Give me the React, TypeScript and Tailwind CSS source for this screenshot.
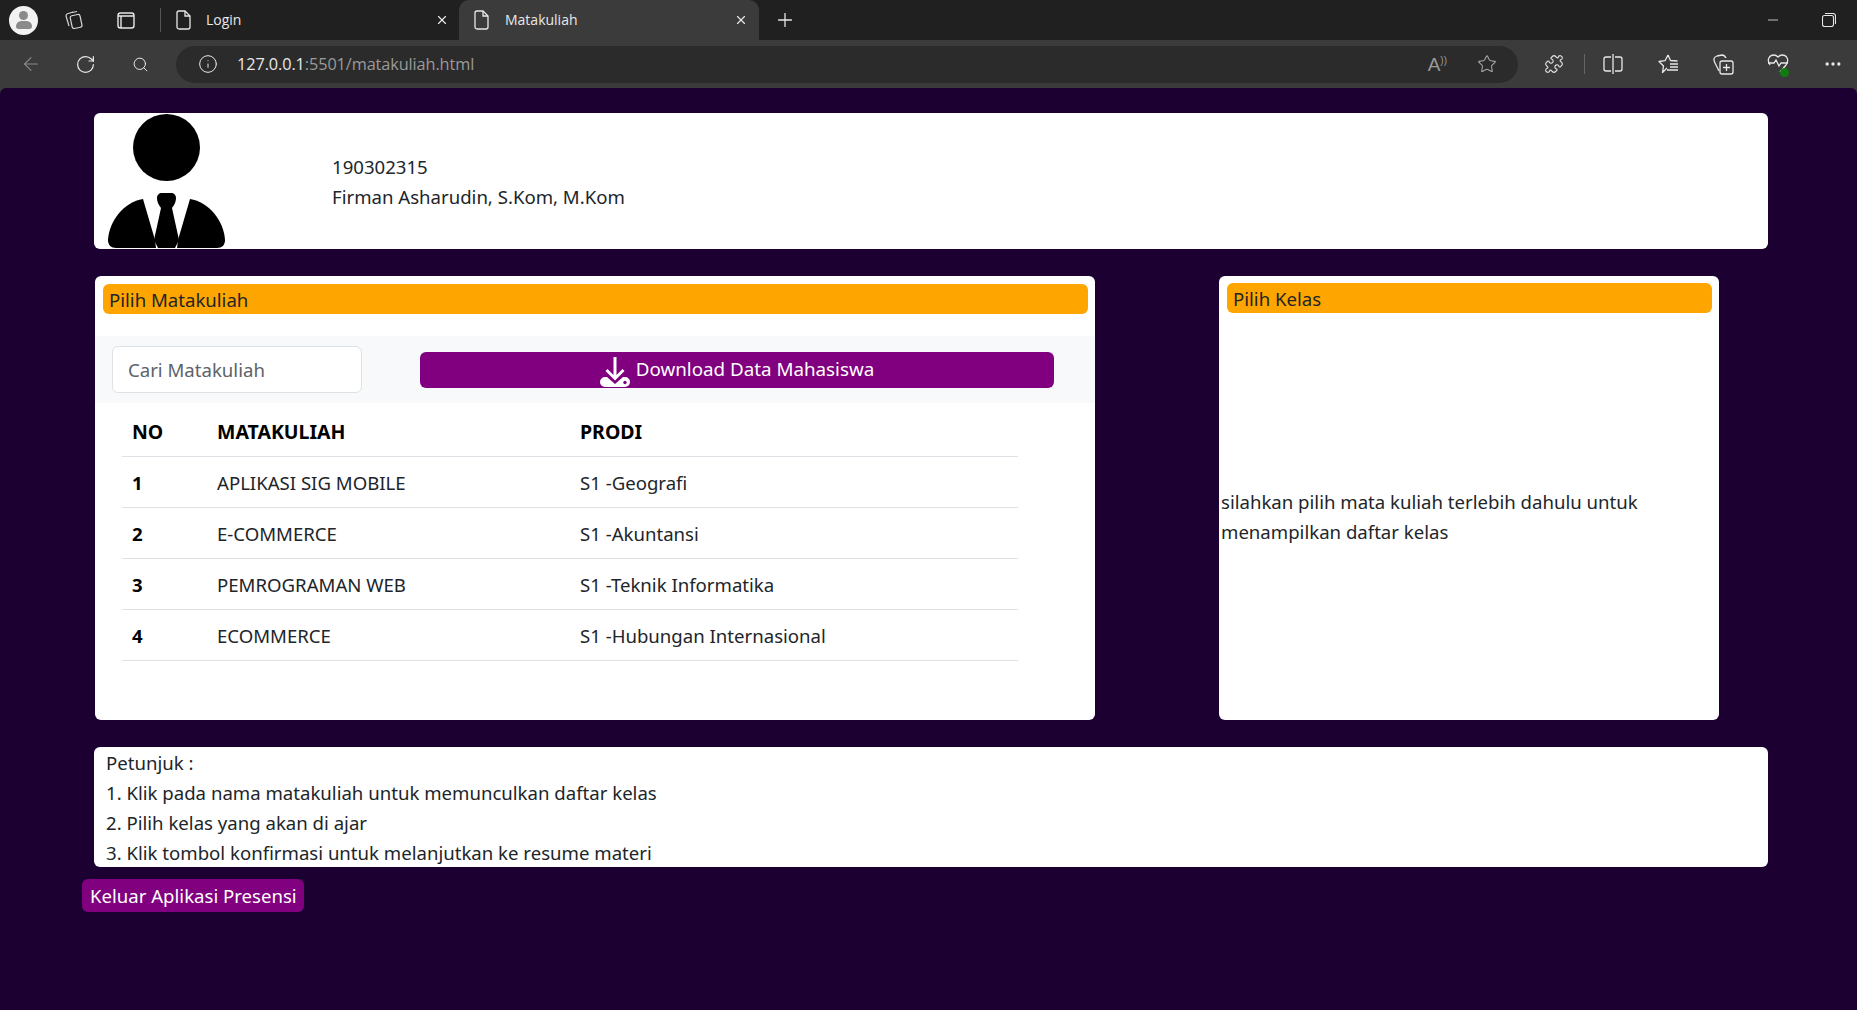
import { Ellipsis, Info, Minus, Plus, RotateCw, Search, Star, X, ArrowLeft, Puzzle } from "lucide-react";

const rows = [
  { no: 1, name: "APLIKASI SIG MOBILE", prodi: "S1 -Geografi" },
  { no: 2, name: "E-COMMERCE", prodi: "S1 -Akuntansi" },
  { no: 3, name: "PEMROGRAMAN WEB", prodi: "S1 -Teknik Informatika" },
  { no: 4, name: "ECOMMERCE", prodi: "S1 -Hubungan Internasional" },
];

const PageIcon = () => (
  <svg width="16" height="20" viewBox="0 0 16 20" fill="none" stroke="#e8e8e8" strokeWidth="1.3">
    <path d="M3 1h6l5 5v11a2 2 0 0 1-2 2H3a2 2 0 0 1-2-2V3a2 2 0 0 1 2-2z" />
    <path d="M9 1v5h5" />
  </svg>
);

const Avatar = () => (
  <svg width="117" height="136" viewBox="0 0 117 136" className="shrink-0">
    <ellipse cx="58.500" cy="34.500" rx="33.500" ry="33.500" fill="#000" />
    <path d="M49 85c0-3 2-5 5-5h9c3 0 5 2 5 5 0 3-1 6-4 10l7 32-4 8H50l-4-8 7-32c-3-4-4-7-4-10z" fill="#000" />
    <path d="M35 86L47 127 48 135H8C3 135 0 132 0 127 1 108 16 89 35 86z" fill="#000" />
    <path d="M82 86L70 127 69 135H109C114 135 117 132 117 127 116 108 101 89 82 86z" fill="#000" />
  </svg>
);

const DownloadIcon = () => (
  <svg width="30" height="30" viewBox="0 0 30 30" fill="#fff" className="mt-[4px] shrink-0">
    <path d="M13.500 0h3v18l6-6 2 2-9.500 9.500L5.500 14l2-2 6 6z" />
    <path d="M5 20h2l8 7 8-7h2a5 5 0 0 1 0 10H5a5 5 0 0 1 0-10z" />
    <circle cx="25" cy="25.500" r="1.700" fill="#800080" />
  </svg>
);

const SplitIcon = () => (
  <svg width="20" height="20" viewBox="0 0 20 20" fill="none" stroke="#e8e8e8" strokeWidth="1.300">
    <path d="M8 3H3a2 2 0 0 0-2 2v10a2 2 0 0 0 2 2h5" />
    <path d="M12 3h5a2 2 0 0 1 2 2v10a2 2 0 0 1-2 2h-5" />
    <path d="M10 0v20" />
  </svg>
);

const FavIcon = () => (
  <svg width="21" height="20" viewBox="0 0 21 20" fill="none" stroke="#e8e8e8" strokeWidth="1.300" strokeLinejoin="round">
    <path d="M10 1l2.500 5.500 7 .5M9 14l-4.500 4.500 1-6.500L1 7.500l6-.8L10 1" />
    <path d="M12 10h8M12 13h8M9 16h11" />
  </svg>
);

const CollectionsIcon = () => (
  <svg width="21" height="21" viewBox="0 0 21 21" fill="none" stroke="#e8e8e8" strokeWidth="1.300">
    <path d="M6 17L2 9C0 5 1 3 4 2l5-1c2 0 3 1 4 3" />
    <rect x="7" y="7" width="13" height="13" rx="2" />
    <path d="M13.500 10v7M10 13.500h7" />
  </svg>
);

const RestoreIcon = () => (
  <svg width="14" height="14" viewBox="0 0 14 14" fill="none" stroke="#e8e8e8" strokeWidth="1.100">
    <rect x="0.500" y="2.500" width="11" height="11" rx="2" />
    <path d="M3 .5h8a2.500 2.500 0 0 1 2.500 2.500v8" />
  </svg>
);

export default function App() {
  return (
    <div className="min-h-screen flex flex-col bg-[#3b3b3b] font-['Noto_Sans',sans-serif] overflow-hidden">
      {/* barra de pestañas */}
      <div className="h-10 bg-[#202020] flex items-center text-[14px] text-[#e8e8e8] font-['Open_Sans',sans-serif] shrink-0">
        <div className="ml-[9px] w-[29px] h-[29px] rounded-full bg-[#f2f2f2] flex flex-col items-center justify-center">
          <div className="w-[9px] h-[9px] rounded-full bg-[#8a8a8a]" />
          <div className="w-[16px] h-[8px] mt-[1px] rounded-t-[6px] rounded-b-[3px] bg-[#8a8a8a]" />
        </div>
        <svg className="ml-[26px]" width="20" height="20" viewBox="0 0 20 20" fill="none" stroke="#d8d8d8" strokeWidth="1.200">
          <rect x="7" y="5" width="10" height="13" rx="2" transform="rotate(-12 12 11)" />
          <path d="M5 16L2 6c0-1 .5-2 1.500-2.300L9 2" />
          <path d="M8 2.500L13 1.500" />
        </svg>
        <svg className="ml-[32px]" width="20" height="20" viewBox="0 0 20 20" fill="none" stroke="#e8e8e8" strokeWidth="1.400">
          <rect x="2" y="3" width="16" height="15" rx="2.500" />
          <path d="M2 6h16M5 6v12" />
        </svg>
        <div className="ml-[24px] w-px h-6 bg-[#555]" />
        <div className="ml-[15px] flex items-center w-[283px] h-10">
          <PageIcon />
          <span className="ml-[14px] mb-px">Login</span>
          <X size={14} className="ml-auto mr-[10px]" />
        </div>
        <div className="w-[300px] h-10 bg-[#3b3b3b] rounded-t-[10px] flex items-center pl-[15px]">
          <PageIcon />
          <span className="ml-[15px] mb-px">Matakuliah</span>
          <X size={14} className="ml-auto mr-[11px]" />
        </div>
        <Plus size={22} strokeWidth={1.400} className="ml-[15px]" />
        <Minus size={16} strokeWidth={1.200} className="ml-auto" />
        <div className="ml-[41px] mr-[21px]">
          <RestoreIcon />
        </div>
      </div>

      {/* barra de direcciones */}
      <div className="h-12 bg-[#3b3b3b] flex items-center text-[#e8e8e8] shrink-0">
        <ArrowLeft size={22} strokeWidth={1.200} className="ml-[20px] text-[#8a8a8a]" />
        <RotateCw size={21} strokeWidth={1.400} className="ml-[33px]" />
        <Search size={17} strokeWidth={1.400} className="ml-[36px]" />
        <div className="ml-[27px] w-[1342px] h-[37px] rounded-full bg-[#2b2b2b] flex items-center">
          <Info size={20} strokeWidth={1.200} className="ml-[22px]" />
          <span className="ml-[19px] text-[16.3px] font-['Open_Sans',sans-serif] tracking-[-0.1px]">
            127.0.0.1<span className="text-[#9a9a9a]">:5501/matakuliah.html</span>
          </span>
          <span className="ml-auto text-[19px] leading-none text-[#9a9a9a] font-['Liberation_Sans',sans-serif]">A<span className="text-[10px] align-super">))</span></span>
          <Star size={20} strokeWidth={1.300} className="ml-[30px] mr-[21px] text-[#a5a5a5]" />
        </div>
        <Puzzle size={20} strokeWidth={1.300} className="ml-[26px]" />
        <div className="ml-[20px] w-px h-5 bg-[#666]" />
        <div className="ml-[18px]">
          <SplitIcon />
        </div>
        <div className="ml-[35px]">
          <FavIcon />
        </div>
        <div className="ml-[34px]">
          <CollectionsIcon />
        </div>
        <div className="relative ml-[33px]">
          <svg width="22" height="20" viewBox="0 0 22 20" fill="none" stroke="#e8e8e8" strokeWidth="1.300">
            <path d="M3 11C-1 5 3 1 7 1c2 0 3 1 4 2 1-1 2-2 4-2 4 0 8 4 4 10l-6 7" />
            <path d="M1 9h6l2-3 3 6 2-3h7" />
          </svg>
          <div className="absolute right-0 bottom-[-3px] w-[9px] h-[9px] rounded-full bg-[#107c10]" />
        </div>
        <Ellipsis size={20} className="ml-[34px]" />
      </div>

      {/* página */}
      <div className="flex-1 bg-[#1c0032] rounded-t-[6px] pt-[25px] pl-[94px] pr-[89px] pb-[97px] text-[#212529] text-[18.6px] leading-[30px]">
        <div className="h-[136px] bg-white rounded-[6px] flex pl-[14px]">
          <Avatar />
          <div className="ml-[107px] mt-[39px]">
            <p>190302315</p>
            <p>Firman Asharudin, S.Kom, M.Kom</p>
          </div>
        </div>

        <div className="flex mt-[27px] h-[444px]">
          <div className="w-[1000px] ml-px bg-white rounded-[6px] pt-2">
            <div className="ml-2 mr-[7px] h-[30px] bg-[#ffa500] rounded-[6px] pl-[6px] pt-px">Pilih Matakuliah</div>
            <div className="mt-[22px] h-[67px] bg-[#f8f9fa] flex items-start pl-[17px]">
              <div className="mt-[10px] w-[250px] h-[47px] bg-white border border-[#dee2e6] rounded-[6px] pl-[15px] pt-px flex items-center text-[#5c636a]">
                Cari Matakuliah
              </div>
              <div className="ml-[58px] mt-[16px] w-[634px] h-[36px] bg-[#800080] rounded-[6px] text-white flex items-center justify-center gap-[6px] text-[18.8px]">
                <DownloadIcon />
                <span className="mb-[2px]">Download Data Mahasiswa</span>
              </div>
            </div>
            <table className="ml-[27px] mt-[2px] w-[896px] border-collapse table-fixed">
              <thead>
                <tr className="h-[51px] border-b border-[#dee2e6] text-[#000] text-left text-[19.5px]">
                  <th className="w-[85px] pl-[10px] pt-[3px] font-bold">NO</th>
                  <th className="w-[363px] pl-[10px] pt-[3px] font-bold">MATAKULIAH</th>
                  <th className="pl-[10px] pt-[3px] font-bold">PRODI</th>
                </tr>
              </thead>
              <tbody>
                {rows.map((r) => (
                  <tr key={r.no} className="h-[51px] border-b border-[#dee2e6]">
                    <td className="pl-[10px] pt-[3px] font-bold text-[#000]">{r.no}</td>
                    <td className="pl-[10px] pt-[3px]">{r.name}</td>
                    <td className="pl-[10px] pt-[3px]">{r.prodi}</td>
                  </tr>
                ))}
              </tbody>
            </table>
          </div>

          <div className="ml-[124px] w-[500px] bg-white rounded-[6px] pt-[7px] flex flex-col">
            <div className="ml-2 mr-[7px] h-[30px] bg-[#ffa500] rounded-[6px] pl-[6px] pt-px">Pilih Kelas</div>
            <div className="flex-1 flex items-center pl-[2px] pr-[50px] pt-px">
              <p>silahkan pilih mata kuliah terlebih dahulu untuk menampilkan daftar kelas</p>
            </div>
          </div>
        </div>

        <div className="mt-[27px] h-[120px] bg-white rounded-[6px] pl-3 pt-px overflow-hidden">
          <p>Petunjuk :</p>
          <p>1. Klik pada nama matakuliah untuk memunculkan daftar kelas</p>
          <p>2. Pilih kelas yang akan di ajar</p>
          <p>3. Klik tombol konfirmasi untuk melanjutkan ke resume materi</p>
        </div>

        <div className="mt-3 -ml-3 w-fit h-[33px] bg-[#800080] rounded-[6px] pl-2 pr-[7px] text-white flex items-center">Keluar Aplikasi Presensi</div>
      </div>
    </div>
  );
}
